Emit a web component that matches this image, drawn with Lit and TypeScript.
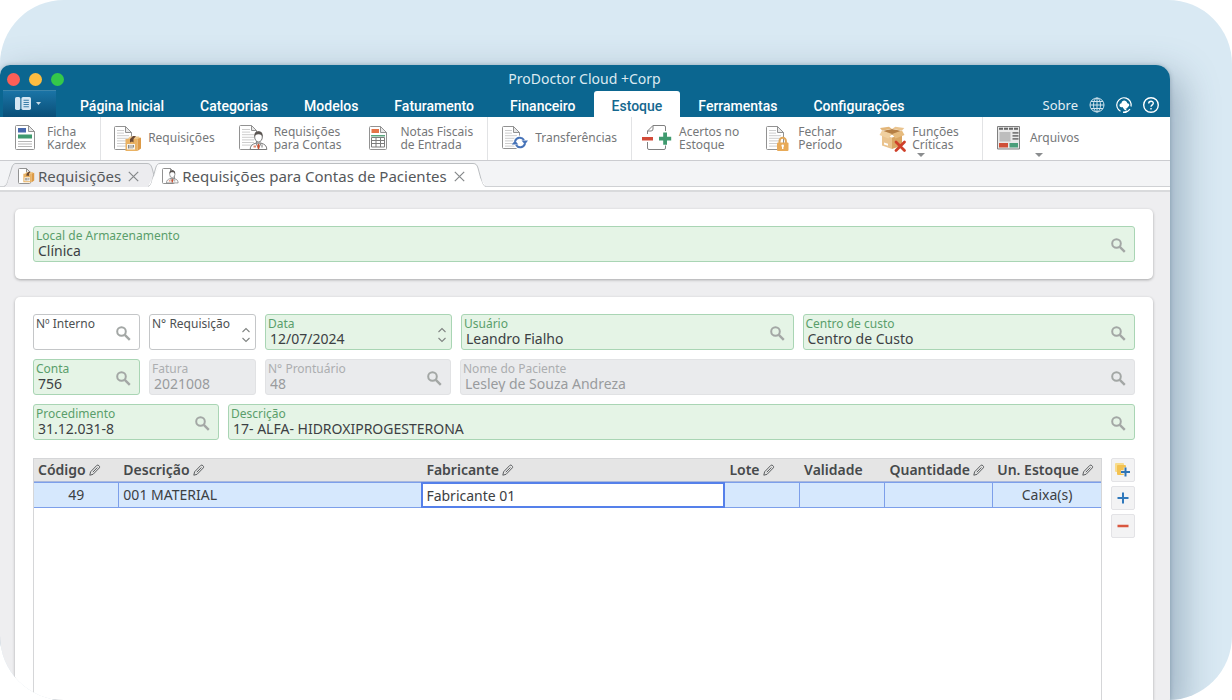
import { LitElement, html, svg, css, nothing, TemplateResult } from "lit";
import { customElement, property, state } from "lit/decorators.js";
import { classMap } from "lit/directives/class-map.js";

const pageOutline = (x: number, y: number, w: number, h: number, fold: number, lines = true) => svg`
  <path d="M${x + 1} ${y}H${x + w - fold}L${x + w} ${y + fold}V${y + h - 1}a1 1 0 0 1-1 1H${x + 1}a1 1 0 0 1-1-1V${y + 1}a1 1 0 0 1 1-1Z" fill="#fff" stroke="#929292"/>
  <path d="M${x + w - fold} ${y}V${y + fold}H${x + w}Z" fill="#e8e8e8" stroke="#929292" stroke-linejoin="round"/>
  ${lines
    ? [0, 1, 2, 3, 4, 5, 6].map(
        (i) => svg`<path d="M${x + 2.5} ${y + 4 + i * 2.6}H${i < 2 ? x + w - fold - 1.5 : x + w - 2.5}" stroke="#cdcdcd"/>`
      )
    : nothing}`;

const crate = svg`
  <path d="M2 4.500 5 1.500h9l2 3Z" fill="#f0c98c"/>
  <path d="M0.500 4h12v12h-12Z" fill="#eab263"/>
  <path d="M12.500 4 16 2.500V13.500l-3.500 2.500Z" fill="#dc9a47"/>
  <path d="M5 4 8 1h3L8.500 4v3.500L7 6.500l-2 1Z" fill="#6b4a35"/>
  <path d="M2 9h8v5.500H2Z" fill="#f7f3ea"/>
  <path d="M3.500 10v3.500M5 10v3.500M7 10v3.500M8.500 10v2.500" stroke="#6d6d6d" stroke-width=".8"/>`;

const doctor = svg`
  <path d="M0.700 18.500c0-3.500 1.800-5.300 5.600-6.300h5.400c3.800 1 5.600 2.800 5.600 6.300Z" fill="#fff" stroke="#777"/>
  <path d="M6.300 12.200 9 17.500l2.700-5.300Z" fill="#e9edf0" stroke="#777" stroke-width=".8"/>
  <path d="M9 12.600l1.200 1.400-.5 4h-1.400l-.5-4Z" fill="#d2502f"/>
  <path d="M4 14.500h2.500v2H4Z" fill="#e58a70"/>
  <path d="M12.500 13.500v3" stroke="#777"/>
  <ellipse cx="9" cy="6" rx="3.800" ry="5" fill="#fff" stroke="#777"/>
  <path d="M5 6C4.400 2 6 .3 9 .3s4.600 1.700 4 5.700c-.6-2-1.500-2.800-4-2.800S5.600 4 5 6Z" fill="#5a5552"/>`;

const toolIcons: Record<string, TemplateResult<2>> = {
  kardex: svg`${pageOutline(5.5, 2.5, 19, 24, 6, false)}
    <path d="M8 5h8v4.500H8Z" fill="#4667ad"/><path d="M8 11.500h14v4H8Z" fill="#3f9a6f"/>
    <path d="M8 18.500h14M8 21h14M8 23.500h14" stroke="#b5b5b5"/>`,
  requisicoes: svg`${pageOutline(3.5, 3.5, 17, 23, 6)}<g transform="translate(14 12)">${crate}</g>`,
  contas: svg`${pageOutline(2.5, 2.5, 17, 24, 5)}<g transform="translate(12.500 8)">${doctor}</g>`,
  notas: svg`${pageOutline(6.5, 3.5, 17, 23, 6, false)}
    <path d="M8.500 6h7.500v4H8.500Z" fill="#e57347"/><path d="M8 12h14v1.500H8Z" fill="#5aa57f"/>
    <path d="M8.500 14.500h13v9.500h-13ZM8.500 17.500h13M8.500 20.500h13M13 14.500v9.500M17.500 14.500v9.500" fill="none" stroke="#7d7d7d"/>`,
  transferencias: svg`${pageOutline(4.5, 3.5, 17, 22, 6)}
    <circle cx="22" cy="19.500" r="7" fill="#fff"/>
    <path d="M17 18.500a5 5 0 0 1 9-1.500M27 20.500a5 5 0 0 1-9 1.500" fill="none" stroke="#4673b8" stroke-width="2"/>
    <path d="M23.500 17.500h6.500l-3 4ZM13.800 21.500h6.500l-3.300-4Z" fill="#4673b8"/>`,
  acertos: svg`<path d="M5.500 11V8l5.500-5.500h11a1.500 1.500 0 0 1 1.500 1.500v4M23.500 22.500v2.500a1.500 1.500 0 0 1-1.500 1.500H7a1.500 1.500 0 0 1-1.500-1.500v-6M5.500 8H9a2 2 0 0 0 2-2V2.500" fill="none" stroke="#808080"/>
    <path d="M0 14h11v3.500H0Z" fill="#d24a38"/>
    <path d="M21.200 9.500h3.800v4.200h4.200v3.800H25v4.200h-3.800v-4.200H17v-3.800h4.200Z" fill="#3f9a6f"/>`,
  fechar: svg`${pageOutline(5.5, 3.5, 17, 23, 6)}
    <path d="M18.500 21v-3a3.200 3.200 0 0 1 6.400 0v3" fill="none" stroke="#e0a75a" stroke-width="2"/>
    <rect x="16" y="19.500" width="11.500" height="8.500" rx="1" fill="#e8aa58"/>
    <circle cx="21.700" cy="22.800" r="1.300" fill="#fff"/><path d="M21.700 23v3" stroke="#fff" stroke-width="1.400"/>`,
  criticas: svg`<path d="M7 12l10 2.500V26L7 22.500Z" fill="#eac48f"/><path d="M27 12l-10 2.500V26l10-3.500Z" fill="#d9a562"/>
    <path d="M7 8l10-2 10 2-10 4Z" fill="#b57f44"/>
    <path d="M7 7.500 4.500 12l9 3.500L17 11Z" fill="#f0d0a0"/><path d="M27 7.500l2.500 4.500-9 3.500L17 11Z" fill="#e6bb7e"/>
    <path d="M7 7.500 5 5l9-1.200L17 6Z" fill="#e3b679"/><path d="M27 7.500 29.300 5l-9-1.200L17 6Z" fill="#eac48f"/>
    <path d="M9 19.500l4 1.300v2l-4-1.300Z" fill="#fff"/>
    <path d="M21 19l8.500 8.500M29.500 19 21 27.500" stroke="#cf4029" stroke-width="2.800" stroke-linecap="round"/>`,
  arquivos: svg`<path d="M4.500 3.500h22v22.500h-22Z" fill="#e9e9e9" stroke="#808080"/>
    <path d="M6 5.800h19.500" stroke="#666" stroke-width="2" stroke-dasharray="4 1"/>
    <path d="M6.500 9h11v9.500h-11Z" fill="#bdbdbd"/>
    <path d="M19.500 9.800h6M19.500 12.800h6M19.500 15.800h6" stroke="#7b7b7b" stroke-width="1.800"/>
    <path d="M6 20h9v4.500H6Z" fill="#cf5038"/><path d="M16.500 20H25v4.500h-8.500Z" fill="#4b9e7a"/>`,
};

interface Tool {
  icon: string;
  lines: string[];
  sep?: boolean;
  wide?: boolean;
  menu?: boolean;
}

const tools: Tool[] = [
  { icon: "kardex", lines: ["Ficha", "Kardex"], sep: true },
  { icon: "requisicoes", lines: ["Requisições"] },
  { icon: "contas", lines: ["Requisições", "para Contas"] },
  { icon: "notas", lines: ["Notas Fiscais", "de Entrada"], sep: true },
  { icon: "transferencias", lines: ["Transferências"], sep: true },
  { icon: "acertos", lines: ["Acertos no", "Estoque"] },
  { icon: "fechar", lines: ["Fechar", "Período"], wide: true },
  { icon: "criticas", lines: ["Funções", "Críticas"], sep: true, wide: true, menu: true },
  { icon: "arquivos", lines: ["Arquivos"], menu: true },
];

const menus = [
  "Página Inicial", "Categorias", "Modelos", "Faturamento",
  "Financeiro", "Estoque", "Ferramentas", "Configurações",
];

@customElement("form-field")
export class FormField extends LitElement {
  @property() label = "";
  @property() value = "";
  @property() tone: "plain" | "filled" | "locked" = "plain";
  @property() action: "search" | "step" | "" = "";

  static styles = css`
    :host { display: block; min-width: 0; }
    .field {
      display: grid;
      grid-template-columns: minmax(0, 1fr) auto;
      grid-template-rows: 14px 16px;
      padding: 2px 3px 2px 2px;
      border: 1px solid #c4c6c8;
      border-radius: 3px;
      background: #fff;
      color: #3c4043;
    }
    .filled { background: #e5f4e6; border-color: #a9d5b4; }
    .locked { background: #eaebed; border-color: #e1e2e4; color: #999b9d; }
    label { font-size: 12px; line-height: 14px; white-space: nowrap; color: #4d5052; }
    .filled label { color: #5a9e6b; }
    .locked label { color: #acaeb0; }
    input {
      grid-row: 2;
      grid-column: 1;
      width: 100%;
      box-sizing: border-box;
      min-width: 0;
      height: 16px;
      padding: 0 2px;
      border: 0;
      outline: 0;
      background: none;
      color: inherit;
      font: 14px/16px "Noto Sans", sans-serif;
      -webkit-text-fill-color: currentColor;
    }
    .act {
      grid-row: 1 / 3;
      grid-column: 2;
      align-self: center;
      display: flex;
      flex-direction: column;
      padding: 3px 5px 0;
      border: 0;
      background: none;
    }
    .steps { padding: 6px 1px 0; gap: 4px; }
    .steps button { display: flex; padding: 0; border: 0; background: none; }
    svg { display: block; }
  `;

  private get control() {
    if (this.action === "search") {
      return html`<button class="act" type="button" aria-label="Pesquisar">
        <svg width="15" height="15" viewBox="0 0 15 15" fill="none" stroke="#a3a7a5">
          <circle cx="5.500" cy="5.500" r="4.300" stroke-width="2"/><path d="M8.800 8.800 13.800 13.800" stroke-width="2.400"/>
        </svg>
      </button>`;
    }
    if (this.action === "step") {
      return html`<div class="act steps">
        <button type="button" aria-label="Aumentar">
          <svg width="10" height="6" viewBox="0 0 10 6" fill="none" stroke="#808482" stroke-width="1.100"><path d="M1.500 5 5 1.500 8.500 5"/></svg>
        </button>
        <button type="button" aria-label="Diminuir">
          <svg width="10" height="6" viewBox="0 0 10 6" fill="none" stroke="#808482" stroke-width="1.100"><path d="M1.500 1 5 4.500 8.500 1"/></svg>
        </button>
      </div>`;
    }
    return nothing;
  }

  render() {
    return html`<div class=${classMap({ field: true, [this.tone]: true })}>
      <label for="value">${this.label}</label>
      <input id="value" type="text" .value=${this.value} ?disabled=${this.tone === "locked"} />
      ${this.control}
    </div>`;
  }
}

@customElement("app-root")
export class AppRoot extends LitElement {
  @state() private active = "Estoque";

  static styles = css`
    :host {
      display: block;
      background: #fff;
      font-family: "Noto Sans", sans-serif;
      color: #3c4043;
    }
    button { font-family: inherit; }
    svg { display: block; flex: none; overflow: visible; }
    .stage {
      display: flex;
      height: 100vh;
      box-sizing: border-box;
      padding: 65px 62px 0 0;
      border-radius: 64px;
      background: #d9e9f3;
      overflow: hidden;
    }
    .window {
      flex: 1;
      min-width: 0;
      display: flex;
      flex-direction: column;
      border-radius: 10px 14px 0 0;
      background: #eeeef0;
      box-shadow: 0 0 4px rgba(58, 88, 112, 0.35), 8px 14px 36px 4px rgba(58, 88, 112, 0.38);
    }
    .head {
      background: #0b6690;
      border-radius: 10px 14px 0 0;
      color: #fff;
    }
    .title {
      display: grid;
      grid-template-columns: 1fr auto 1fr;
      align-items: center;
      height: 26px;
      padding: 0 8px 0 7px;
      box-sizing: border-box;
      font-size: 14px;
      color: #dceaf1;
    }
    .lights { display: flex; gap: 9px; padding-top: 3px; }
    .light { width: 13px; height: 13px; border-radius: 50%; background: #fc5f57; }
    .light.min { background: #fdbd40; }
    .light.max { background: #34c84a; }
    .menubar { display: flex; align-items: stretch; height: 26px; padding: 0 11px 0 3px; }
    .app {
      display: flex;
      align-items: center;
      justify-content: center;
      gap: 5px;
      width: 53px;
      margin-right: 6px;
      padding: 0 3px 2px 0;
      border: 0;
      background: linear-gradient(#1a74a6, #0a4f78);
      box-shadow: 0 -1px 0 #3c86ac;
    }
    .menu {
      padding: 4px 18px 0;
      border: 0;
      border-radius: 3px 3px 0 0;
      background: none;
      color: #fff;
      font: 500 14px/22px Roboto, sans-serif;
      white-space: nowrap;
    }
    .menu.on { background: #fff; color: #15688f; }
    .links { display: flex; align-items: center; gap: 11px; margin-left: auto; font-size: 13px; padding-top: 2px; }
    .links a { color: #e3eef4; text-decoration: none; }
    .toolbar {
      display: flex;
      height: 43px;
      background: #fff;
      border-bottom: 1px solid #cbccd0;
    }
    .tool {
      position: relative;
      display: flex;
      align-items: center;
      gap: 7px;
      box-sizing: border-box;
      padding: 0 12px 2px 10px;
      border: 0;
      background: none;
      color: #757779;
      font-size: 12px;
      line-height: 13px;
      text-align: left;
      white-space: nowrap;
    }
    .tool.sep { padding-right: 14px; border-right: 1px solid #e2e3e5; }
    .tool.wide { padding-right: 23px; }
    .arrow {
      position: absolute;
      left: 52px;
      bottom: 3px;
      border: 4px solid transparent;
      border-top-color: #8b8d8f;
      border-bottom: 0;
    }
    .tabs {
      display: flex;
      align-items: flex-end;
      height: 25px;
      padding-left: 4px;
      background: #f3f4f6;
      border-bottom: 1px solid #cfd1d4;
    }
    .tab { display: flex; height: 24px; margin-right: -12px; margin-bottom: -1px; }
    .tab + .tab { position: relative; }
    .tab .cap { fill: #ececef; stroke: #bbbec1; }
    .body {
      display: flex;
      align-items: center;
      gap: 4px;
      padding: 0 5px 0 2px;
      border-top: 1px solid #bbbec1;
      background: #ececef;
      color: #55585b;
      font-size: 15px;
      line-height: 20px;
      white-space: nowrap;
    }
    .tab.on .cap { fill: #fff; }
    .tab.on .body { background: #fff; }
    .close { display: flex; margin-left: 3px; padding: 2px 0 0; border: 0; background: none; }
    .strip { height: 3px; background: #fff; border-bottom: 2px solid #d9dadc; }
    main {
      flex: 1;
      min-height: 0;
      display: flex;
      flex-direction: column;
      gap: 18px;
      padding: 17px 17px 0 15px;
    }
    .card {
      padding: 17px 18px;
      border-radius: 5px;
      background: #fff;
      box-shadow: 0 1px 3px rgba(0, 0, 0, 0.3);
      display: flex;
      flex-direction: column;
      gap: 9px;
    }
    .grow { flex: 1; min-height: 0; padding-bottom: 0; border-radius: 5px 5px 0 0; }
    .row { display: grid; gap: 9px; }
    .r1 { grid-template-columns: 107px 107px 187px 1fr 1fr; }
    .r2 { grid-template-columns: 107px 107px 186px 1fr; }
    .r3 { grid-template-columns: 186px 1fr; }
    .items { flex: 1; min-height: 0; display: flex; gap: 9px; padding-top: 9px; }
    .grid {
      flex: 1;
      min-width: 0;
      box-sizing: border-box;
      border: 1px solid #d5d6d8;
      border-bottom: 0;
    }
    table { width: 100%; table-layout: fixed; border-spacing: 0; }
    .c1 { width: 8%; }
    .c2 { width: 28.400%; }
    .c4 { width: 7%; }
    .c5 { width: 8%; }
    .c6 { width: 10.100%; }
    th {
      height: 22px;
      padding: 0 4px;
      background: #e5e5e5;
      border-bottom: 1px solid #a9b8dc;
      font-size: 14px;
      line-height: 20px;
      font-weight: 600;
      text-align: left;
      color: #46494b;
    }
    .th { display: flex; align-items: center; gap: 3px; white-space: nowrap; }
    td {
      height: 24px;
      padding: 0 4px;
      border: 1px solid #7d9fea;
      border-left: 0;
      background: #d6e8fd;
      font-size: 14px;
      line-height: 20px;
    }
    td:last-child { border-right: 0; }
    .mid { text-align: center; }
    td.edit { padding: 0; }
    .edit input {
      display: block;
      width: 100%;
      height: 24px;
      box-sizing: border-box;
      padding: 0 3px;
      border: 1px solid #5580ea;
      outline: 1px solid #5580ea;
      background: #fff;
      color: inherit;
      font: 14px/20px "Noto Sans", sans-serif;
    }
    .side { display: flex; flex-direction: column; gap: 4px; }
    .side button {
      display: flex;
      align-items: center;
      justify-content: center;
      width: 24px;
      height: 24px;
      padding: 0;
      border: 1px solid #e3e3e6;
      border-radius: 2px;
      background: #f3f3f4;
    }
  `;

  private head(text: string, editable = true) {
    return html`<th><span class="th">${text}${editable
      ? html`<svg width="12" height="12" viewBox="0 0 12 12" fill="none" stroke="#5c5f61">
          <path d="M.8 11.200 1.600 7.800 7.900 1.300c1-1 3.600 1.200 2.500 2.500L4.100 10.300ZM3.800 8.200 8.400 3.500"/>
        </svg>`
      : nothing}</span></th>`;
  }

  private tab(text: string, on: boolean, icon: TemplateResult<2>) {
    return html`<div class=${classMap({ tab: true, on })}>
      <svg width="12" height="24" viewBox="0 0 12 24">
        <path class="cap" d="M0 23.500C3 22.500 3.500 20 4.500 16L8 4C9 1.500 10 .5 12 .5" />
        <path d="M12 1v23H0c3-1.500 3.500-4 4.500-8Z" fill="${on ? "#fff" : "#ececef"}" />
      </svg>
      <div class="body">
        <svg width="16" height="18" viewBox="0 0 16 18">${icon}</svg>
        <span>${text}</span>
        <button class="close" type="button" aria-label="Fechar ${text}">
          <svg width="11" height="11" viewBox="0 0 11 11" stroke="#85888a" stroke-width="1.200"><path d="M.8.8l9.400 9.400M10.200.8.800 10.200"/></svg>
        </button>
      </div>
      <svg width="16" height="24" viewBox="0 0 16 24">
        <path class="cap" d="M0 .5H3C6 .5 7 2 8 5l3.500 13c1 3.500 2 5 4.500 5.500" />
        <path d="M0 1H3L11.500 18c1 3.500 2 5 4.500 6H0Z" fill="${on ? "#fff" : "#ececef"}" />
      </svg>
    </div>`;
  }

  render() {
    return html`<div class="stage">
      <div class="window">
        <header class="head">
          <div class="title">
            <div class="lights"><span class="light"></span><span class="light min"></span><span class="light max"></span></div>
            <span>ProDoctor Cloud +Corp</span>
          </div>
          <nav class="menubar">
            <button class="app" type="button" aria-label="Menu do aplicativo">
              <svg width="16" height="13" viewBox="0 0 15 12" fill="#d5e6f2">
                <rect width="5" height="12" rx="1.500"/><rect x="6" width="9" height="12" rx="1.500"/>
                <path d="M8 3h5M8 5h5M8 7h5M8 9h5" stroke="#3d7fa8"/>
              </svg>
              <svg width="5" height="3" viewBox="0 0 5 3" fill="#c5dbe8"><path d="M0 0h5L2.500 3Z"/></svg>
            </button>
            ${menus.map(
              (m) => html`<button type="button" class=${classMap({ menu: true, on: m === this.active })} @click=${() => (this.active = m)}>${m}</button>`
            )}
            <div class="links">
              <a href="#">Sobre</a>
              <a href="#" aria-label="Site">
                <svg width="16" height="16" viewBox="0 0 16 16" fill="none" stroke="#cfe2ec"><circle cx="8" cy="8" r="7"/><ellipse cx="8" cy="8" rx="3.500" ry="7"/><path d="M8 1v14M1 8h14M2 4.500h12M2 11.500h12"/></svg>
              </a>
              <a href="#" aria-label="Suporte">
                <svg width="16" height="16" viewBox="0 0 16 16" fill="none" stroke="#fff" stroke-width="1.200">
                  <path d="M4.500 14.300A7.200 7.200 0 1 1 15 9.500M14 12.200C12.500 14.500 11 15 8.500 15.200"/>
                  <path d="M3.500 8.500C3.500 7 4.500 6.300 5.500 6.300c0-3.500 5-3.800 5.800 0 2.400 0 2.700 3 .5 3.600-.5 1.500-1.500 2-2.300 1.500l1.500 2.100C8 13.500 7.500 11 6.500 10 5 10.500 3.500 10 3.500 8.500Z" fill="#fff" stroke="none"/>
                  <path d="M7 15.200h3.500" stroke-width="1.600"/>
                </svg>
              </a>
              <a href="#" aria-label="Ajuda">
                <svg width="16" height="16" viewBox="0 0 16 16" fill="none" stroke="#fff" stroke-width="1.400"><circle cx="8" cy="8" r="7.300"/><path d="M5.700 6.400c0-3 4.700-2.900 4.600-.1 0 1.500-2.300 1.700-2.300 3.500M8 11v1.600"/></svg>
              </a>
            </div>
          </nav>
        </header>
        <div class="toolbar">
          ${tools.map(
            (t) => html`<button type="button" class=${classMap({ tool: true, sep: !!t.sep, wide: !!t.wide })}>
              <svg width="30" height="30" viewBox="0 0 30 30">${toolIcons[t.icon]}</svg>
              <span>${t.lines[0]}${t.lines[1] ? html`<br />${t.lines[1]}` : nothing}</span>
              ${t.menu ? html`<span class="arrow"></span>` : nothing}
            </button>`
          )}
        </div>
        <div class="tabs">
          ${this.tab("Requisições", false, svg`${pageOutline(0.5, 1.5, 12, 15, 4, false)}<g transform="translate(5 4) scale(.7)">${crate}</g>`)}
          ${this.tab("Requisições para Contas de Pacientes", true, svg`${pageOutline(0.5, 1.5, 12, 15, 4, false)}<g transform="translate(4 3) scale(.7)">${doctor}</g>`)}
        </div>
        <div class="strip"></div>
        <main>
          <section class="card">
            <form-field label="Local de Armazenamento" value="Clínica" tone="filled" action="search"></form-field>
          </section>
          <section class="card grow">
            <div class="row r1">
              <form-field label="Nº Interno" action="search"></form-field>
              <form-field label="N° Requisição" action="step"></form-field>
              <form-field label="Data" value="12/07/2024" tone="filled" action="step"></form-field>
              <form-field label="Usuário" value="Leandro Fialho" tone="filled" action="search"></form-field>
              <form-field label="Centro de custo" value="Centro de Custo" tone="filled" action="search"></form-field>
            </div>
            <div class="row r2">
              <form-field label="Conta" value="756" tone="filled" action="search"></form-field>
              <form-field label="Fatura" value="2021008" tone="locked"></form-field>
              <form-field label="N° Prontuário" value="48" tone="locked" action="search"></form-field>
              <form-field label="Nome do Paciente" value="Lesley de Souza Andreza" tone="locked" action="search"></form-field>
            </div>
            <div class="row r3">
              <form-field label="Procedimento" value="31.12.031-8" tone="filled" action="search"></form-field>
              <form-field label="Descrição" value="17- ALFA- HIDROXIPROGESTERONA" tone="filled" action="search"></form-field>
            </div>
            <div class="items">
              <div class="grid">
                <table>
                  <colgroup>
                    <col class="c1" /><col class="c2" /><col class="c2" /><col class="c4" /><col class="c5" /><col class="c6" /><col />
                  </colgroup>
                  <thead>
                    <tr>
                      ${this.head("Código")}${this.head("Descrição")}${this.head("Fabricante")}${this.head("Lote")}
                      ${this.head("Validade", false)}${this.head("Quantidade")}${this.head("Un. Estoque")}
                    </tr>
                  </thead>
                  <tbody>
                    <tr>
                      <td class="mid">49</td>
                      <td>001 MATERIAL</td>
                      <td class="edit"><input type="text" aria-label="Fabricante" .value=${"Fabricante 01"} /></td>
                      <td></td>
                      <td></td>
                      <td></td>
                      <td class="mid">Caixa(s)</td>
                    </tr>
                  </tbody>
                </table>
              </div>
              <div class="side">
                <button type="button" aria-label="Adicionar vários">
                  <svg width="16" height="14" viewBox="0 0 16 14"><rect width="9" height="9" rx="1" fill="#f8dc8c"/><rect x="2" y="2" width="9" height="10" rx="1" fill="#f3c252"/><path d="M10.500 4.500v9M6 9h9" stroke="#f3f3f4" stroke-width="3.500"/><path d="M10.500 4.500v9M6 9h9" stroke="#2f74b5" stroke-width="2"/></svg>
                </button>
                <button type="button" aria-label="Adicionar">
                  <svg width="12" height="12" viewBox="0 0 12 12" stroke="#2f78bb" stroke-width="2"><path d="M6 .5v11M.5 6h11"/></svg>
                </button>
                <button type="button" aria-label="Remover">
                  <svg width="12" height="12" viewBox="0 0 12 12" stroke="#d9573f" stroke-width="2.500"><path d="M.5 6h11"/></svg>
                </button>
              </div>
            </div>
          </section>
        </main>
      </div>
    </div>`;
  }
}
